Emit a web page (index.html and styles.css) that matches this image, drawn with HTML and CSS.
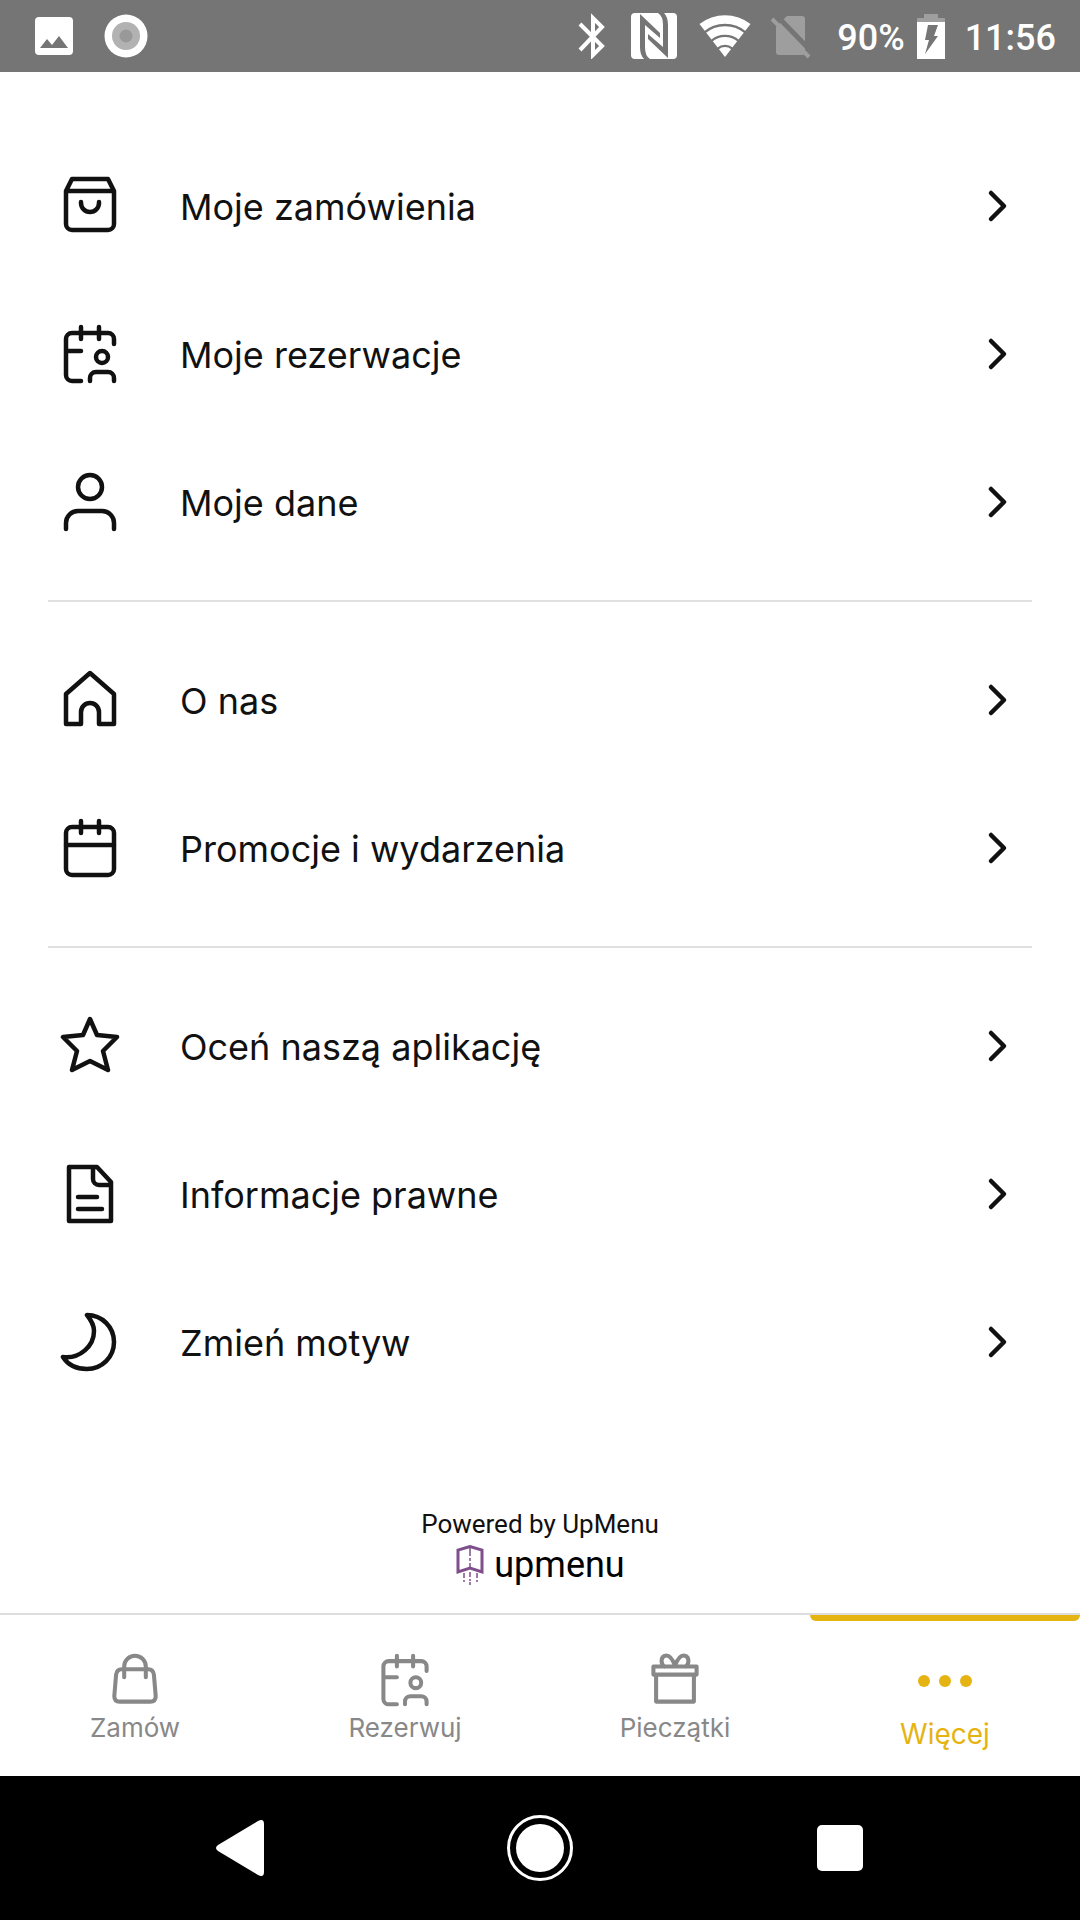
FILE: index.html
```html
<!DOCTYPE html>
<html lang="pl">
<head>
    <meta charset="UTF-8">
    <meta name="viewport" content="width=device-width, initial-scale=1">
    <title>Więcej</title>
    <link rel="stylesheet" href="styles.css">
</head>
<body>
<svg class="sprite" aria-hidden="true">
    <symbol id="chevron" viewBox="0 0 24 36">
        <path d="M5 5l13 13L5 31"/>
    </symbol>
    <symbol id="reservation" viewBox="0 0 60 60">
        <path d="M54 20v-5a6 6 0 0 0-6-6H12a6 6 0 0 0-6 6v36a6 6 0 0 0 6 6h9M6 27h15M21 3v12M39 3v12M30 57v-3a6 6 0 0 1 6-6h12a6 6 0 0 1 6 6v3"/>
        <circle cx="42" cy="33" r="6"/>
    </symbol>
</svg>

<header class="status">
    <div class="statusLeft">
        <svg width="38" height="38" viewBox="0 0 38 38">
            <rect width="38" height="38" rx="4" fill="#fff"/>
            <path d="M5 31l7-9 5 6 7-9 9 12z" fill="#757575"/>
        </svg>
        <svg width="44" height="44" viewBox="0 0 44 44">
            <circle cx="22" cy="22" r="21.5" fill="#fff"/>
            <circle cx="22" cy="22" r="14" fill="#b2b2b2"/>
            <circle cx="22" cy="22" r="6.5" fill="#999"/>
        </svg>
    </div>
    <div class="statusRight">
        <svg width="33" height="46" viewBox="0 0 33 46" fill="none" stroke="#fff" stroke-width="4">
            <path d="M2 11l22 22-9 9V5l9 9L2 37"/>
        </svg>
        <svg width="48" height="46" viewBox="0 0 48 46">
            <rect width="46" height="46" rx="4" fill="#fff"/>
            <path d="M9 1l20 19v5L14 12v22q0 9 5 12h-6q-4-4-4-12zM37 45L17 26v-5l15 13V12q0-9-5-12h6q4 4 4 12z" fill="#757575"/>
        </svg>
        <svg width="52" height="46" viewBox="0 0 52 46">
            <path d="M26 44L.5 11a42 42 0 0 1 51 0z" fill="#fff"/>
            <path d="M5.2 19.7a32 32 0 0 1 41.6 0M12.3 28a21 21 0 0 1 27.4 0M18.8 35.6a11 11 0 0 1 14.4 0" fill="none" stroke="#757575" stroke-width="2.3"/>
        </svg>
        <svg width="46" height="46" viewBox="0 0 46 46">
            <path d="M10 9l6-6h15q3 0 3 3v33q0 3-3 3H8q-3 0-3-3V14z" fill="#9e9e9e"/>
            <path d="M4 1l38 39" stroke="#757575" stroke-width="5"/>
            <path d="M1 6L38 44" stroke="#9e9e9e" stroke-width="4"/>
        </svg>
        <div class="battery">
            <span>90%</span>
            <svg width="28" height="46" viewBox="0 0 28 46">
                <path d="M0 10V6q0-1 1-1h6V1h14v4h6q1 0 1 1v4z" fill="#9e9e9e"/>
                <path d="M0 9h28v37H0z" fill="#fff"/>
                <path d="M11 12h10l-4 11h4L8 41l4-14H8z" fill="#757575"/>
            </svg>
        </div>
        <time>11:56</time>
    </div>
</header>

<main class="content">
    <nav class="menu">
        <ul>
            <li><a href="#">
                <svg class="icon" viewBox="0 0 60 60"><path d="M6 15v33a6 6 0 0 0 6 6h36a6 6 0 0 0 6-6V15L48 3H12zM6 15h48M21 26v1a9 9 0 0 0 18 0v-1"/></svg>
                <span>Moje zamówienia</span>
                <svg class="chevron"><use href="#chevron"/></svg>
            </a></li>
            <li><a href="#">
                <svg class="icon"><use href="#reservation"/></svg>
                <span>Moje rezerwacje</span>
                <svg class="chevron"><use href="#chevron"/></svg>
            </a></li>
            <li><a href="#">
                <svg class="icon" viewBox="0 0 60 60"><circle cx="30" cy="15" r="12"/><path d="M6 57v-6a12 12 0 0 1 12-12h24a12 12 0 0 1 12 12v6"/></svg>
                <span>Moje dane</span>
                <svg class="chevron"><use href="#chevron"/></svg>
            </a></li>
        </ul>
        <ul>
            <li><a href="#">
                <svg class="icon" viewBox="0 0 60 60"><path d="M30 3l24 21v30H39V42a9 9 0 0 0-18 0v12H6V24z"/></svg>
                <span>O nas</span>
                <svg class="chevron"><use href="#chevron"/></svg>
            </a></li>
            <li><a href="#">
                <svg class="icon" viewBox="0 0 60 60"><rect x="6" y="9" width="48" height="48" rx="6"/><path d="M6 27h48M21 3v12M39 3v12"/></svg>
                <span>Promocje i wydarzenia</span>
                <svg class="chevron"><use href="#chevron"/></svg>
            </a></li>
        </ul>
        <ul>
            <li><a href="#">
                <svg class="icon" viewBox="0 0 60 60"><path d="M30 3l7 16 20 2-14 14 5 19-18-9-18 9 5-19L3 21l20-2z"/></svg>
                <span>Oceń naszą aplikację</span>
                <svg class="chevron"><use href="#chevron"/></svg>
            </a></li>
            <li><a href="#">
                <svg class="icon" viewBox="0 0 60 60"><path d="M9 3h28l14 15v39H9zM33 3v12a6 6 0 0 0 6 6h12M18 33h19M18 45h24"/></svg>
                <span>Informacje prawne</span>
                <svg class="chevron"><use href="#chevron"/></svg>
            </a></li>
            <li><a href="#">
                <svg class="icon" viewBox="0 0 60 60"><path d="M27 3C42 3 54 15 54 30S42 57 27 57C17 57 8 53 3 45 20 47 34 34 34 19 34 13 31 8 27 3z"/></svg>
                <span>Zmień motyw</span>
                <svg class="chevron"><use href="#chevron"/></svg>
            </a></li>
        </ul>
    </nav>
    <div class="powered">
        <p>Powered by UpMenu</p>
        <div class="logo">
            <svg width="32" height="40" viewBox="0 0 32 40" fill="none" stroke="#7f4f8c" stroke-width="3">
                <path d="M3 27V5l12-3.5L27 5v22l-12-4z"/>
                <path d="M15 2v22" stroke-width="1.5" stroke-dasharray="9 2 3 2"/>
                <path d="M9 28v10M15 27v13M22 28v10" stroke-width="1.5" stroke-dasharray="5 2 2 1"/>
            </svg>
            <span>upmenu</span>
        </div>
    </div>
</main>

<nav class="tabs">
    <a href="#">
        <svg viewBox="0 0 60 60"><path d="M15 18h30q5 0 6 6l2 24q0 6-6 6H13q-6 0-6-6l2-24q1-6 6-6zM18 27V15a12 12 0 0 1 24 0v12"/></svg>
        <span>Zamów</span>
    </a>
    <a href="#">
        <svg><use href="#reservation"/></svg>
        <span>Rezerwuj</span>
    </a>
    <a href="#">
        <svg viewBox="0 0 60 60"><path d="M6 15h48v9H6zM9 24h42v30H9zM30 14C27 6 23 2 19 3c-5 1-5 9-1 12M30 14C33 6 37 2 41 3c5 1 5 9 1 12"/></svg>
        <span>Pieczątki</span>
    </a>
    <a href="#" class="on">
        <svg viewBox="0 0 60 60"><circle cx="9" cy="28" r="6"/><circle cx="30" cy="28" r="6"/><circle cx="51" cy="28" r="6"/></svg>
        <span>Więcej</span>
    </a>
</nav>

<footer class="system">
    <button type="button" aria-label="Wstecz">
        <svg width="66" height="66" viewBox="0 0 66 66"><path d="M11 30L51 6q6-3 6 3v48q0 6-6 3L11 36q-4-3 0-6z" fill="#fff"/></svg>
    </button>
    <button type="button" aria-label="Ekran główny">
        <svg width="66" height="66" viewBox="0 0 66 66"><circle cx="33" cy="33" r="31.5" fill="none" stroke="#fff" stroke-width="3"/><circle cx="33" cy="33" r="24" fill="#fff"/></svg>
    </button>
    <button type="button" aria-label="Ostatnie">
        <svg width="66" height="66" viewBox="0 0 66 66"><rect x="10" y="10" width="46" height="46" rx="5" fill="#fff"/></svg>
    </button>
</footer>
</body>
</html>
```
FILE: styles.css
```css
*{
    margin: 0;
    padding: 0;
    box-sizing: border-box;
    list-style: none;
}
body{
    display: flex;
    flex-direction: column;
    min-height: 100vh;
    background: #fff;
    color: #111;
    font-family: Inter, Roboto, sans-serif;
}
a{
    color: inherit;
    text-decoration: none;
}
svg{
    display: block;
    flex: none;
}
.sprite{
    display: none;
}

/* status bar */
.status{
    display: flex;
    justify-content: space-between;
    align-items: center;
    height: 72px;
    padding: 0 24px 0 35px;
    background: #757575;
    color: #fff;
    font: 500 36px/50px Roboto, sans-serif;
}
.statusLeft,
.statusRight{
    display: flex;
    align-items: center;
}
.statusLeft{
    gap: 31px;
}
.statusRight{
    gap: 20px;
}
.battery{
    display: flex;
    align-items: center;
    gap: 12px;
}
.battery span,
.status time{
    padding-top: 3px;
}

/* menu */
.content{
    flex: 1;
    display: flex;
    flex-direction: column;
    justify-content: space-between;
    padding: 60px 48px 28px;
}
.menu ul + ul{
    margin-top: 24px;
    padding-top: 24px;
    border-top: 2px solid #e0e0e0;
}
.menu a{
    display: flex;
    align-items: center;
    height: 148px;
    padding: 0 22px 0 12px;
    font-size: 36px;
    line-height: 48px;
}
.menu span{
    flex: 1;
    margin-left: 60px;
    padding-top: 2px;
}
.icon,
.chevron,
.tabs svg{
    fill: none;
    stroke: currentColor;
    stroke-width: 4.5;
    stroke-linecap: round;
    stroke-linejoin: round;
}
.icon{
    width: 60px;
    height: 60px;
}
.chevron{
    width: 24px;
    height: 36px;
}

.powered{
    display: flex;
    flex-direction: column;
    align-items: center;
    gap: 6px;
    font: 26px/30px Roboto, sans-serif;
}
.logo{
    display: flex;
    gap: 7px;
    color: #000;
    font-size: 36px;
    line-height: 40px;
}

/* bottom tabs */
.tabs{
    display: grid;
    grid-template-columns: repeat(4, 1fr);
    height: 163px;
    border-top: 2px solid #ddd;
}
.tabs a{
    display: flex;
    flex-direction: column;
    align-items: center;
    gap: 4px;
    padding-top: 38px;
    color: #888;
    font-size: 26px;
    line-height: 34px;
}
.tabs svg{
    width: 54px;
    height: 54px;
}
.tabs .on{
    padding-top: 0;
    color: #e5b413;
    font-size: 28px;
}
.tabs .on:before{
    content: "";
    width: 100%;
    height: 6px;
    margin-bottom: 28px;
    border-radius: 0 0 6px 6px;
    background: #e5b413;
}
.tabs .on svg{
    width: 60px;
    height: 60px;
    fill: currentColor;
    stroke: none;
}

/* system buttons */
.system{
    display: grid;
    grid-template-columns: repeat(3, 1fr);
    height: 144px;
    padding: 0 90px;
    background: #000;
}
.system button{
    display: flex;
    align-items: center;
    justify-content: center;
    border: 0;
    background: none;
    cursor: pointer;
}
```
